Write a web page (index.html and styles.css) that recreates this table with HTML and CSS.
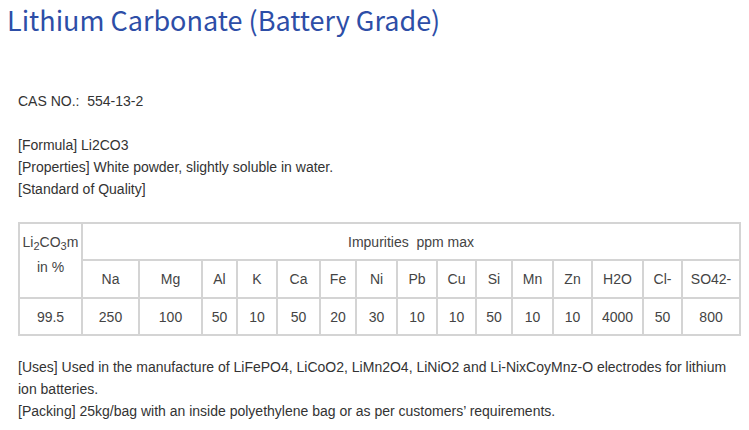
FILE: index.html
```html
<!DOCTYPE html>
<html>
<head>
<meta charset="utf-8">
<link rel="stylesheet" href="styles.css">
</head>
<body>
<h1 class="title">Lithium Carbonate (Battery Grade)</h1>
<div class="content">
  <p class="cas">CAS NO.:&nbsp; 554-13-2</p>
  <p class="block">[Formula] Li2CO3<br>[Properties] White powder, slightly soluble in water.<br>[Standard of Quality]</p>
  <table class="spec">
    <colgroup>
      <col style="width:63px"><col style="width:57px"><col style="width:63px"><col style="width:35px"><col style="width:40px"><col style="width:43px"><col style="width:36px"><col style="width:41px"><col style="width:40px"><col style="width:39px"><col style="width:36px"><col style="width:41px"><col style="width:39px"><col style="width:51px"><col style="width:39px"><col style="width:58px">
    </colgroup>
    <tr class="r1">
      <td rowspan="2" class="first">Li<sub>2</sub>CO<sub>3</sub>m<br>in %</td>
      <td colspan="15">Impurities&nbsp; ppm max</td>
    </tr>
    <tr class="r2">
      <td>Na</td><td>Mg</td><td>Al</td><td>K</td><td>Ca</td><td>Fe</td><td>Ni</td><td>Pb</td><td>Cu</td><td>Si</td><td>Mn</td><td>Zn</td><td>H2O</td><td>Cl-</td><td>SO42-</td>
    </tr>
    <tr class="r3">
      <td>99.5</td><td>250</td><td>100</td><td>50</td><td>10</td><td>50</td><td>20</td><td>30</td><td>10</td><td>10</td><td>50</td><td>10</td><td>10</td><td>4000</td><td>50</td><td>800</td>
    </tr>
  </table>
  <p class="block uses">[Uses] Used in the manufacture of LiFePO4, LiCoO2, LiMn2O4, LiNiO2 and Li-NixCoyMnz-O electrodes for lithium ion batteries.<br>[Packing] 25kg/bag with an inside polyethylene bag or as per customers’ requirements.</p>
</div>
</body>
</html>
```
FILE: styles.css
```css
html, body {
  margin: 0;
  padding: 0;
  background: #fff;
}
body {
  font-family: "Liberation Sans", Arial, sans-serif;
  color: #333;
}
.title {
  margin: 0;
  padding: 0 0 0 7px;
  height: 44px;
  font-family: "Noto Sans CJK KR", "Noto Sans", sans-serif;
  font-weight: 400;
  font-size: 27px;
  line-height: 40px;
  color: #2d4ea7;
}
.content {
  padding: 0 10px 0 18px;
  font-size: 14px;
  line-height: 22px;
}
.content p {
  margin: 0;
}
.cas {
  padding-top: 46px;
}
.block {
  margin-top: 22px !important;
}
.spec {
  margin-top: 22px;
  border-collapse: collapse;
  table-layout: fixed;
  width: 722px;
  color: #444;
}
.spec td {
  border: 2px solid #d4d4d4;
  text-align: center;
  padding: 0;
  font-size: 14px;
}
.spec .r1 td { height: 35px; }
.spec .r2 td { height: 36px; }
.spec .r3 td { height: 35px; }
.spec .first {
  vertical-align: top;
  line-height: 25px;
  padding-top: 6px;
  white-space: nowrap;
}
.spec sub {
  font-size: 11px;
  vertical-align: -3px;
  line-height: 0;
}
.uses {
  margin-top: 20px !important;
}
```
